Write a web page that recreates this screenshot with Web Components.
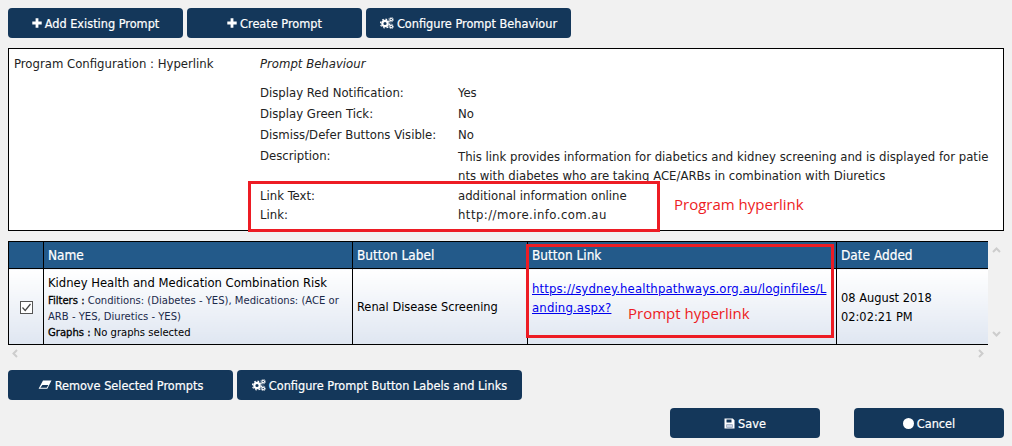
<!DOCTYPE html>
<html>
<head>
<meta charset="utf-8">
<title>Prompt configuration</title>
<style>
html,body{margin:0;padding:0;height:446px;overflow:hidden;background:#f1f1f1}
body{font-family:"DejaVu Sans Condensed","DejaVu Sans",sans-serif;font-size:13px;color:#222}
</style>
</head>
<body>
<prompt-page></prompt-page>

<template id="cogs-icon">
  <svg width="14" height="12" viewBox="0 0 14 12" fill="none" stroke="#fff">
    <circle cx="5" cy="6.5" r="2.7" stroke-width="2.2"/>
    <circle cx="5" cy="6.5" r="4.4" stroke-width="1.3" stroke-dasharray="1.7 1.75"/>
    <circle cx="11.2" cy="2.6" r="1.3" stroke-width="1.1"/>
    <circle cx="11.2" cy="2.6" r="2.4" stroke-width=".8" stroke-dasharray="1 .9"/>
    <circle cx="11.2" cy="9.4" r="1.3" stroke-width="1.1"/>
    <circle cx="11.2" cy="9.4" r="2.4" stroke-width=".8" stroke-dasharray="1 .9"/>
  </svg>
</template>
<template id="plus-icon">
  <svg width="10" height="10" viewBox="0 0 10 10"><path fill="#fff" d="M3.6.3h2.8v3.3h3.3v2.8H6.4v3.3H3.6V6.4H.3V3.6h3.3z"/></svg>
</template>
<template id="eraser-icon">
  <svg width="14" height="10" viewBox="0 0 14 10"><path fill="#fff" d="M5 .5h8.5L9.3 8.8H.6zM4.4 5 2.3 7.8h6.4L10.4 5z" fill-rule="evenodd"/></svg>
</template>
<template id="save-icon">
  <svg width="11" height="11" viewBox="0 0 11 11"><path fill="#fff" fill-rule="evenodd" d="M.5.5h8.2l1.8 1.8v8.2H.5zM2.5 1.5v3h5v-3zM2.5 6.5v3h6v-3z"/><path fill="#c9d3e6" d="M2.5 6.5h6v3h-6z"/></svg>
</template>
<template id="circle-icon">
  <svg width="11" height="11" viewBox="0 0 11 11"><circle cx="5.5" cy="5.5" r="5.5" fill="#fff"/></svg>
</template>

<script>
const iconFrom = (name) => document.getElementById(name+"-icon").content.cloneNode(true)

class ActionButton extends HTMLElement {
  connectedCallback() {
    const shadow = this.attachShadow({mode: 'open'})
    shadow.innerHTML = `
<style>
:host{
  display:flex;
  align-items:center;
  justify-content:center;
  gap:3px;
  height:30px;
  box-sizing:border-box;
  background:#14375a;
  border-radius:4px;
  color:#fff;
  font-size:12.6px;
  font-weight:400;
  -webkit-text-stroke:.2px #fff;
  white-space:nowrap;
}
svg{display:block;flex:none}
</style>
<span id="icon" style="display:contents"></span><slot></slot>`
    shadow.getElementById("icon").append(iconFrom(this.getAttribute("icon")))
  }
}
customElements.define("action-button", ActionButton)

class ConfigPanel extends HTMLElement {
  constructor(){
    super()
    this.attachShadow({mode: 'open'}).innerHTML = `
<style>
:host{
  display:grid;
  grid-template-columns:246px 1fr;
  height:183px;
  box-sizing:border-box;
  border:1px solid #000;
  background:#fff;
  padding:7px 5px 0;
  line-height:16px;
  color:#222;
}
h4{margin:0 0 13px;height:16px;font-size:inherit;font-style:italic;font-weight:400}
dl{margin:0;display:grid;grid-template-columns:198px 1fr;grid-auto-rows:minmax(21px,auto)}
dt,dd{margin:0}
dd{word-break:break-all;line-height:19px;margin-top:-1.5px;padding-right:4px}
dd.short{line-height:16px;margin-top:0}
dt.gap,dd.gap{padding-top:3px}
dt.low,dd.low{padding-top:1px}
dd.url{letter-spacing:.45px}
</style>
<div>Program Configuration : Hyperlink</div>
<div>
  <h4>Prompt Behaviour</h4>
  <dl>
    <dt>Display Red Notification:</dt><dd class="short">Yes</dd>
    <dt>Display Green Tick:</dt><dd class="short">No</dd>
    <dt>Dismiss/Defer Buttons Visible:</dt><dd class="short">No</dd>
    <dt>Description:</dt><dd>This link provides information for diabetics and kidney screening and is displayed for patients with diabetes who are taking ACE/ARBs in combination with Diuretics</dd>
    <dt class="gap">Link Text:</dt><dd class="short gap">additional information online</dd>
    <dt class="low">Link:</dt><dd class="short low url">http://more.info.com.au</dd>
  </dl>
</div>`
  }
}
customElements.define("config-panel", ConfigPanel)

class PromptTable extends HTMLElement {
  constructor(){
    super()
    this.attachShadow({mode: 'open'}).innerHTML = `
<style>
:host{display:grid;grid-template-columns:980px 16px;grid-template-rows:104px 16px;color:#000}
table{border-collapse:collapse;table-layout:fixed;width:980px;height:104px}
th,td{border:1px solid #000;padding:0 4px;text-align:left}
th{height:27px;background:#235a8a;color:#fff;font-weight:400;font-size:13.5px;-webkit-text-stroke:.2px #fff;padding-bottom:1px;box-sizing:border-box}
td{background:linear-gradient(#fff,#dfe6f1);font-size:12.7px;line-height:19px}
td.name{font-size:11.15px;line-height:16px;padding-right:2px;padding-top:1px}
td.name b{display:block;font-weight:400;font-size:12.9px;line-height:18px;margin-bottom:1px}
td.name strong{font-weight:400;-webkit-text-stroke:.3px #000}
td.name span{color:#1b2a4a}
td.box{padding:0;text-align:center}
td.link{word-break:break-all;padding-bottom:17px;font-size:13px;letter-spacing:.15px}
a{color:#00e}
.check{display:block;margin:1px auto 0}
.rail{display:flex;flex-direction:column;justify-content:space-between;align-items:center;padding:6px 0 8px;box-sizing:border-box;background:#f1f1f1}
.hbar{display:flex;justify-content:space-between;align-items:center;padding:0 4px 0 4px;background:#f1f1f1}
svg.arrow{display:block}
</style>
<table>
  <colgroup><col style="width:35px"><col style="width:309px"><col style="width:175px"><col style="width:309px"><col style="width:152px"></colgroup>
  <tr><th></th><th>Name</th><th>Button Label</th><th>Button Link</th><th>Date Added</th></tr>
  <tr>
    <td class="box"><svg class="check" width="13" height="13" viewBox="0 0 13 13"><rect x=".5" y=".5" width="12" height="12" fill="#fff" stroke="#555"/><path d="M2.5 6.5 5.2 9.5 10.5 3" fill="none" stroke="#444" stroke-width="1.2"/></svg></td>
    <td class="name"><b>Kidney Health and Medication Combination Risk</b><strong>Filters :</strong> <span>Conditions: (Diabetes - YES), Medications: (ACE or ARB - YES, Diuretics - YES)</span><br><strong>Graphs :</strong> No graphs selected</td>
    <td>Renal Disease Screening</td>
    <td class="link"><a href="#">https://sydney.healthpathways.org.au/loginfiles/Landing.aspx?</a></td>
    <td>08 August 2018<br>02:02:21 PM</td>
  </tr>
</table>
<div class="rail">
  <svg class="arrow" width="9" height="6" viewBox="0 0 9 6"><path d="M1 5 4.5 1.5 8 5" fill="none" stroke="#cdcdcd" stroke-width="2"/></svg>
  <svg class="arrow" width="9" height="6" viewBox="0 0 9 6"><path d="M1 1 4.5 4.5 8 1" fill="none" stroke="#cdcdcd" stroke-width="2"/></svg>
</div>
<div class="hbar">
  <svg class="arrow" width="6" height="9" viewBox="0 0 6 9"><path d="M5 1 1.5 4.5 5 8" fill="none" stroke="#cdcdcd" stroke-width="2"/></svg>
  <svg class="arrow" width="6" height="9" viewBox="0 0 6 9"><path d="M1 1 4.5 4.5 1 8" fill="none" stroke="#cdcdcd" stroke-width="2"/></svg>
</div>`
  }
}
customElements.define("prompt-table", PromptTable)

// red markup drawn over the screenshot: these sit on top of the content
class RedMark extends HTMLElement {
  constructor(){
    super()
    this.attachShadow({mode: 'open'}).innerHTML = `
<style>
:host{position:absolute;box-sizing:border-box;border:3px solid #ed1c24;pointer-events:none}
span{position:absolute;white-space:nowrap;color:#ed1c24;font:15px/20px "Open Sans","DejaVu Sans",sans-serif}
</style>
<span><slot></slot></span>`
  }
  connectedCallback(){
    const [l,t,w,h,tx,ty] = this.getAttribute("box").split(",")
    Object.assign(this.style,{left:l+"px",top:t+"px",width:w+"px",height:h+"px"})
    const label = this.shadowRoot.querySelector("span")
    label.style.left = tx+"px"
    label.style.top = ty+"px"
  }
}
customElements.define("red-mark", RedMark)

class PromptPage extends HTMLElement {
  constructor(){
    super()
    this.attachShadow({mode: 'open'}).innerHTML = `
<style>
:host{display:flex;flex-direction:column;padding:8px;width:996px;position:relative}
.row{display:flex;gap:4px}
.top{margin-bottom:10px}
prompt-table{margin:10px 0 9px}
.bottom{justify-content:flex-end;gap:34px;margin-top:8px}
</style>
<div class="row top">
  <action-button icon="plus" style="width:175px">Add Existing Prompt</action-button>
  <action-button icon="plus" style="width:175px">Create Prompt</action-button>
  <action-button icon="cogs" style="width:205px">Configure Prompt Behaviour</action-button>
</div>
<config-panel></config-panel>
<prompt-table></prompt-table>
<div class="row">
  <action-button icon="eraser" style="width:225px">Remove Selected Prompts</action-button>
  <action-button icon="cogs" style="width:285px">Configure Prompt Button Labels and Links</action-button>
</div>
<div class="row bottom">
  <action-button icon="save" style="width:150px">Save</action-button>
  <action-button icon="circle" style="width:150px">Cancel</action-button>
</div>
<red-mark box="248,181,412,51,423,10">Program hyperlink</red-mark>
<red-mark box="526,244,308,94,99,56">Prompt hyperlink</red-mark>`
  }
}
customElements.define("prompt-page", PromptPage)
</script>
</body>
</html>
